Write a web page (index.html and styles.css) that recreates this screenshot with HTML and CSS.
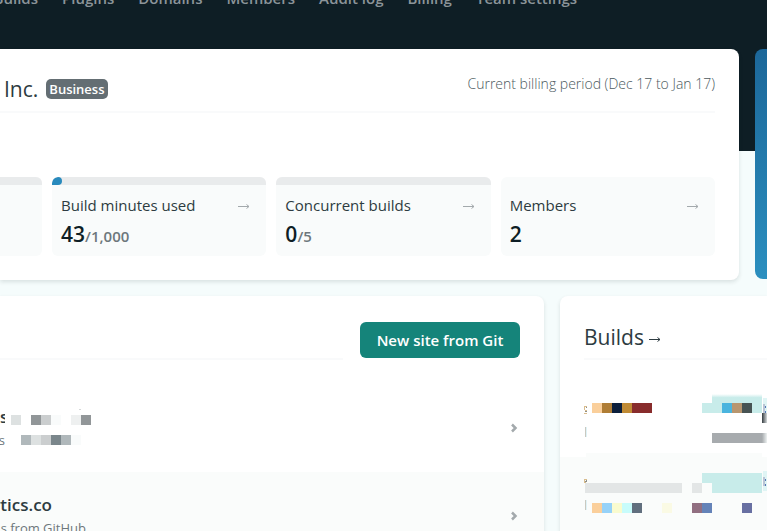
FILE: index.html
```html
<!DOCTYPE html>
<html lang="en">
<head>
<meta charset="utf-8">
<meta name="viewport" content="width=device-width, initial-scale=1">
<title>Team overview</title>
<link rel="stylesheet" href="styles.css">
</head>
<body>
<header class="topbar">
  <nav class="nav">
    <a class="nav-cut" href="#">Builds</a>
    <a href="#">Plugins</a>
    <a href="#">Domains</a>
    <a href="#">Members</a>
    <a href="#">Audit log</a>
    <a href="#">Billing</a>
    <a href="#">Team settings</a>
  </nav>
</header>
<main class="page">
  <div class="row row-team">
    <section class="card team">
      <div class="team-head">
        <h1>Inc. <span class="badge">Business</span></h1>
        <p class="period">Current billing period (Dec 17 to Jan 17)</p>
      </div>
      <div class="stats">
        <div class="stat"><div class="meter"></div></div>
        <a class="stat" href="#">
          <div class="meter"><span class="meter-fill"></span></div>
          <div class="stat-label">Build minutes used
            <svg class="arrow" viewBox="0 0 12 8" aria-hidden="true"><path d="M0 4.500H11M8.500 2.500L11 4.500L8.500 6.500"/></svg>
          </div>
          <div class="stat-value">43<small>/1,000</small></div>
        </a>
        <a class="stat" href="#">
          <div class="meter"></div>
          <div class="stat-label">Concurrent builds
            <svg class="arrow" viewBox="0 0 12 8" aria-hidden="true"><path d="M0 4.500H11M8.500 2.500L11 4.500L8.500 6.500"/></svg>
          </div>
          <div class="stat-value">0<small>/5</small></div>
        </a>
        <a class="stat" href="#">
          <div class="meter meter-none"></div>
          <div class="stat-label">Members
            <svg class="arrow" viewBox="0 0 12 8" aria-hidden="true"><path d="M0 4.500H11M8.500 2.500L11 4.500L8.500 6.500"/></svg>
          </div>
          <div class="stat-value">2</div>
        </a>
      </div>
    </section>
    <aside class="promo"></aside>
  </div>
  <div class="row row-lists">
    <section class="card sites">
      <div class="sites-head">
        <div class="rule"></div>
        <button class="primary" type="button">New site from Git</button>
      </div>
      <a class="site" href="#">
        <div class="site-text">
          <div class="cut name-short">sc</div>
          <div class="cut note-short">s</div>
        </div>
        <svg class="mosaic-site" viewBox="0 0 90 88" aria-hidden="true" shape-rendering="crispEdges">
          <path fill="#dde1e1" d="M6 31h10v10H6zM26 51h10v10H26z"/>
          <path fill="#919698" d="M26 31h10v10H26zM76 31h10v10H76z"/>
          <path fill="#cbcecf" d="M36 31h10v10H36zM36 51h10v10H36z"/>
          <path fill="#f9fbfb" d="M46 31h10v10H46zM66 51h10v10H66z"/>
          <path fill="#eef0f0" d="M66 31h10v10H66z"/>
          <path fill="#b0b8bb" d="M16 51h10v10H16zM56 51h10v10H56z"/>
          <path fill="#7a868b" d="M46 51h10v10H46z"/>
          <path fill="#d5d8d8" d="M74 25h2v1H74z"/>
        </svg>
        <svg class="chevron" viewBox="0 0 8 10" aria-hidden="true"><path d="M2 1.500L5.500 5L2 8.500"/></svg>
      </a>
      <a class="site alt" href="#">
        <div class="site-text">
          <div class="cut name-long">ytics.co</div>
          <div class="cut note-long">s from GitHub</div>
        </div>
        <svg class="chevron" viewBox="0 0 8 10" aria-hidden="true"><path d="M2 1.500L5.500 5L2 8.500"/></svg>
      </a>
    </section>
    <section class="card builds">
      <h2 class="builds-head">Builds <svg class="arrow" viewBox="0 0 12 8" aria-hidden="true"><path d="M0 4.500H11M8.500 2.500L11 4.500L8.500 6.500"/></svg></h2>
      <div class="build">
        <svg class="mosaic" viewBox="0 0 207 73" aria-hidden="true" shape-rendering="crispEdges">
          <defs>
            <linearGradient id="fade" x2="0" y2="1"><stop stop-color="#fff"/><stop offset=".4" stop-color="#c8ecea"/></linearGradient>
            <linearGradient id="edge"><stop stop-color="#333b40"/><stop offset="1" stop-color="#d5d9da"/></linearGradient>
            <linearGradient id="soft"><stop stop-color="#a7abae"/><stop offset="1" stop-color="#edf1f1"/></linearGradient>
          </defs>
          <path fill="#d9bd8e" d="M24 22h3v1h-2v3h-1zM25 26h2v1h-2zM24 29h3v1h-3z"/>
          <path fill="#8d8f8a" d="M26 23h1v1h-1zM25 27h2v1h-2z"/>
          <path fill="#c9c9c0" d="M25 43h1v10h-1z"/><path fill="#dff2f7" d="M26 43h1v10h-1z"/>
          <path fill="#facf9b" d="M32 19h10v10H32z"/>
          <path fill="#af7d35" d="M42 19h10v10H42z"/>
          <path fill="#0c1f3c" d="M52 19h10v10H52z"/>
          <path fill="#c08b35" d="M62 19h10v10H62z"/>
          <path fill="#882c2c" d="M72 19h20v10H72z"/>
          <path fill="url(#fade)" d="M152 10h50v9h-50z"/>
          <path fill="#c8ecea" d="M142 19h60v10h-60z"/>
          <path fill="#4ab4de" d="M162 19h10v10h-10z"/>
          <path fill="#b8966f" d="M172 19h10v10h-10z"/>
          <path fill="#475353" d="M182 19h10v10h-10z"/>
          <path fill="#e0f5f5" d="M203 14h4v15h-4z"/>
          <path fill="#b9c5d5" d="M203 20h2v9h-2z"/>
          <path fill="#5376b5" d="M205 22h1v2h-1zM205 27h1v2h-1z"/>
          <path fill="url(#edge)" d="M202 29h5v10h-5z"/>
          <path fill="#a7abae" d="M152 49h50v10h-50z"/>
          <path fill="url(#soft)" d="M202 49h5v10h-5z"/>
          <path fill="#fafcfb" d="M26 69h176v4H26z"/>
        </svg>
      </div>
      <div class="build alt">
        <svg class="mosaic" viewBox="0 0 207 73" aria-hidden="true" shape-rendering="crispEdges">
          <path fill="#d9bd8e" d="M24 22h3v1h-2v3h-1zM24 25h2v1h-2z"/>
          <path fill="#8d8f8a" d="M26 23h1v1h-1zM25 24h2v1h-2z"/>
          <path fill="#c9c9c0" d="M25 43h1v10h-1z"/><path fill="#dff2f7" d="M26 43h1v10h-1z"/>
          <path fill="#e3e6e6" d="M25 26h97v10H25zM132 26h10v10h-10z"/>
          <path fill="#c8ecea" d="M142 16h60v10h-60zM152 26h50v10h-50z"/>
          <path fill="#facf9b" d="M32 46h10v10H32z"/>
          <path fill="#96d2f8" d="M42 46h10v10H42z"/>
          <path fill="#f9fbcf" d="M52 46h10v10H52z"/>
          <path fill="#c8fcfb" d="M62 46h10v10H62z"/>
          <path fill="#616f7e" d="M72 46h10v10H72z"/>
          <path fill="#fafae4" d="M102 46h10v10h-10z"/>
          <path fill="#916f81" d="M132 46h10v10h-10z"/>
          <path fill="#6483b8" d="M142 46h10v10h-10z"/>
          <path fill="#6870a2" d="M182 46h10v10h-10z"/>
          <path fill="#e0f5f5" d="M203 14h4v20h-4z"/>
          <path fill="#b9c5d5" d="M203 20h2v9h-2z"/>
          <path fill="#5376b5" d="M205 22h1v2h-1zM205 27h1v2h-1z"/>
        </svg>
      </div>
    </section>
  </div>
</main>
</body>
</html>
```
FILE: styles.css
```css
* { box-sizing: border-box; }

html { height: 100%; overflow: hidden; }

body {
  margin: 0;
  height: 100%;
  overflow: hidden;
  background: #f5fcfc;
  color: #2d3b41;
  font-family: "Open Sans", "Noto Sans", sans-serif;
  font-size: 15px;
}

a { color: inherit; text-decoration: none; }
h1, h2, p { margin: 0; font-weight: 500; }

.topbar {
  height: 151px;
  overflow: hidden;
  background: #0e1e25;
}

.nav {
  display: flex;
  gap: 24px;
  margin-top: -12px;
  color: #8b9499;
  font-size: 15px;
  font-weight: 600;
  line-height: 20px;
  white-space: nowrap;
}

.nav-cut {
  display: flex;
  justify-content: flex-end;
  width: 38px;
}

.page { margin-top: -102px; }

.row { display: grid; gap: 16px; }
.row-team { grid-template-columns: 1fr 12px; }
.row-lists { grid-template-columns: 544fr 207fr; margin-top: 16px; }

.card {
  background: #fff;
  box-shadow: 0 2px 4px rgba(14, 30, 37, 0.12);
}

.team {
  padding: 24px 24px 24px 0;
  border-radius: 0 8px 8px 0;
}

.promo {
  margin-bottom: 1px;
  border-radius: 8px 0 0 8px;
  background: linear-gradient(#1c6799, #2b8fbf);
}

.team-head {
  display: flex;
  justify-content: space-between;
  height: 40px;
  padding-left: 4px;
  border-bottom: 2px solid #f9fafb;
}

.team-head h1 {
  display: flex;
  align-items: center;
  gap: 8px;
  height: 32px;
  font-size: 21px;
}

.badge {
  padding: 0 3px;
  border-radius: 5px;
  background: #646e73;
  color: #fff;
  font-size: 13px;
  font-weight: 600;
  line-height: 20px;
}

.period {
  color: #4c5a60;
  font-size: 14px;
  font-weight: 300;
  line-height: 22px;
}

.stats {
  display: grid;
  grid-template-columns: 42fr 214fr 214fr 214fr;
  gap: 10px;
  margin-top: 64px;
}

.stat {
  height: 79px;
  overflow: hidden;
  border-radius: 6px;
  background: #f9fbfb;
}

.stat:first-child { border-radius: 0 6px 6px 0; }

.meter { height: 8px; background: #e9ebec; }
.meter-none { background: none; }

.meter-fill {
  display: block;
  width: 10px;
  height: 8px;
  border-radius: 6px 4px 4px 0;
  background: #298abd;
}

.stat-label {
  display: flex;
  align-items: center;
  justify-content: space-between;
  padding: 10px 16px 0 9px;
  line-height: 21px;
}

.arrow {
  width: 12px;
  height: 8px;
  fill: none;
  stroke: #a3a9ac;
  stroke-width: 1;
}

.stat-value {
  padding-left: 9px;
  color: #0e1e25;
  font-size: 21px;
  font-weight: 600;
  line-height: 36px;
}

.stat-value small { color: #6d777c; font-size: 15px; }

.sites {
  padding-top: 26px;
  border-radius: 0 8px 0 0;
}

.sites-head {
  display: flex;
  gap: 17px;
  align-items: flex-start;
  height: 62px;
  padding-right: 24px;
}

.rule {
  flex: 1;
  height: 38px;
  border-bottom: 2px solid #f9fafb;
}

.primary {
  width: 160px;
  height: 36px;
  padding: 0;
  border: 0;
  border-radius: 6px;
  background: #15847a;
  color: #fff;
  font: inherit;
  font-weight: 600;
}

.site {
  display: flex;
  align-items: center;
  height: 88px;
  padding-right: 26px;
}

.alt { background: #fafcfb; }

.cut {
  display: flex;
  justify-content: flex-end;
  overflow: hidden;
  white-space: nowrap;
}

.name-short, .name-long { font-size: 17px; font-weight: 600; line-height: 24px; }
.note-short, .note-long { color: #6d777c; font-size: 13px; line-height: 22px; }
.name-short, .note-short { width: 5px; }
.name-short { justify-content: flex-start; }
.name-long { width: 52px; }
.note-long { width: 86px; }

.mosaic-site { width: 90px; height: 88px; }

.chevron {
  width: 8px;
  height: 10px;
  margin-left: auto;
  fill: none;
  stroke: #a3a9ac;
  stroke-width: 2.5;
}

.builds { border-radius: 8px 0 0 0; }

.builds-head {
  display: flex;
  align-items: center;
  gap: 5px;
  height: 64px;
  margin: 0 0 24px 24px;
  padding-top: 20px;
  border-bottom: 2px solid #f9fafb;
  font-size: 21px;
}

.builds-head .arrow { margin-top: 4px; stroke: #2d3b41; }

.build { height: 73px; }

.mosaic { display: block; width: 207px; height: 73px; }
```
